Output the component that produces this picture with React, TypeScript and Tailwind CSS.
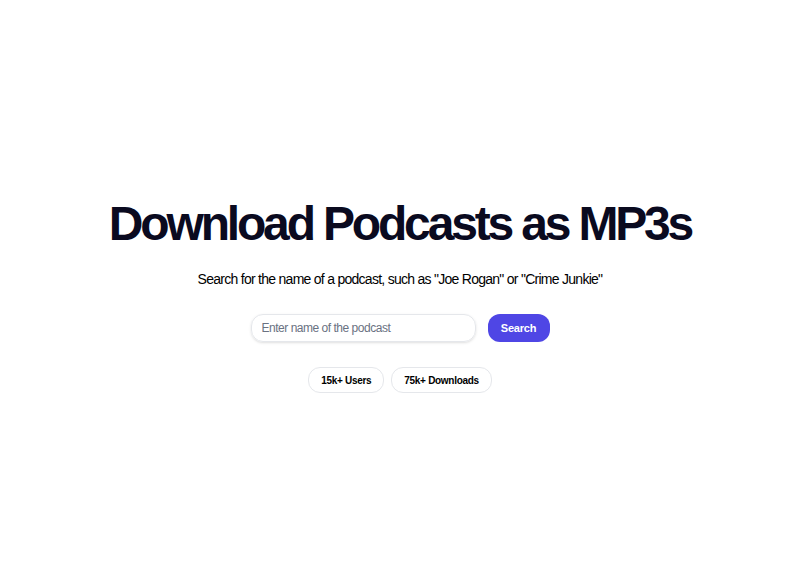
export default function App() {
  return (
    <div
      className="min-h-screen bg-white flex flex-col items-center pt-[194px] text-[#0b0b1a]"
      style={{ fontFamily: '"Liberation Sans", Arial, sans-serif' }}
    >
      <h1 className="text-[48px] font-bold tracking-[-0.066em] leading-[60px] text-[#0a0a1f]">
        Download Podcasts as MP3s
      </h1>
      <p className="mt-[15px] text-[14px] leading-5 tracking-[-0.052em] text-black">
        Search for the name of a podcast, such as "Joe Rogan" or "Crime Junkie"
      </p>
      <div className="mt-[25px] flex items-center gap-3">
        <input
          type="text"
          placeholder="Enter name of the podcast"
          className="w-[225px] h-[28px] rounded-xl border border-gray-200 px-[10px] text-[12px] tracking-[-0.04em] text-gray-700 placeholder:text-gray-500 outline-none shadow-sm"
        />
        <button className="h-[28px] w-[62px] rounded-xl bg-[#4f46e5] text-white text-[11px] font-bold tracking-[-0.02em]">
          Search
        </button>
      </div>
      <div className="mt-[25px] flex items-center gap-[7px]">
        <span className="h-[26px] px-[12px] flex items-center rounded-xl border border-gray-200 text-[10px] font-bold tracking-[-0.03em] text-black">
          15k+ Users
        </span>
        <span className="h-[26px] px-[12px] flex items-center rounded-xl border border-gray-200 text-[10px] font-bold tracking-[-0.03em] text-black">
          75k+ Downloads
        </span>
      </div>
    </div>
  );
}
